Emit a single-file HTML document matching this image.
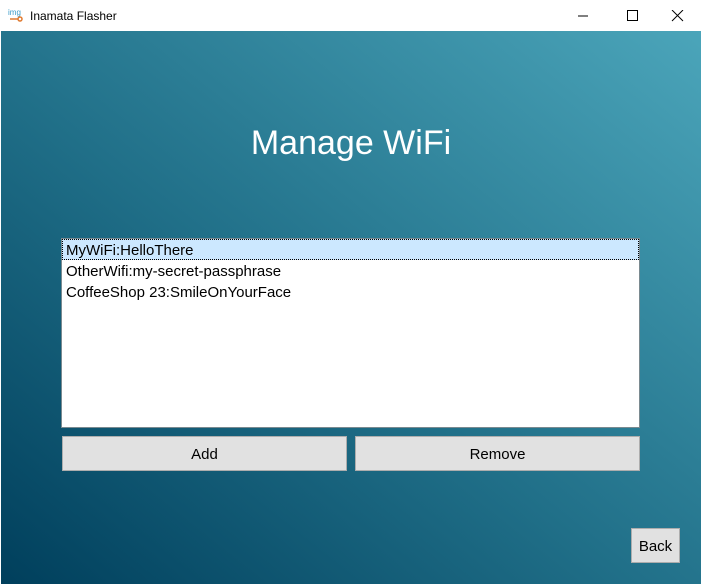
<!DOCTYPE html>
<html><head><style>
body{margin:0;width:702px;height:585px;overflow:hidden;font-family:"Liberation Sans",sans-serif;background:#fff;position:relative}
.tb{position:absolute;left:0;top:0;width:702px;height:31px;background:#fff;font-size:12px}
.tb .t{position:absolute;left:30px;top:9px;color:#000}
.main{position:absolute;left:1px;top:31px;width:700px;height:553px;background:linear-gradient(to top right,#003f5c 0%,#206f88 45%,#4ba5ba 100%)}
h1{position:absolute;left:0;width:700px;top:93px;margin:0;text-align:center;color:#fff;font-weight:normal;font-size:34px}
.list{position:absolute;left:61px;top:238px;width:577px;height:188px;background:#fff;border:1px solid #7a8a90;font-size:15px}
.it{height:21px;line-height:23px;padding-left:4px;color:#000}
.sel{background:#cce8ff;outline:1px dotted #000;outline-offset:-1px}
.btn{position:absolute;background:#e1e1e1;border:1px solid #adadad;text-align:center;font-size:15px;color:#000;box-sizing:border-box}
</style></head><body>
<div class="tb">
<svg style="position:absolute;left:8px;top:7px" width="18" height="16" viewBox="0 0 18 16"><text x="0" y="8" font-size="8" fill="#3a9cc9" font-family="Liberation Sans">img</text><path d="M2 12h8" stroke="#e07a30" stroke-width="1.5"/><circle cx="12" cy="12" r="2" fill="none" stroke="#e07a30" stroke-width="1.5"/></svg>
<span class="t">Inamata Flasher</span>
<svg style="position:absolute;left:578px;top:10px" width="110" height="12"><path d="M0 6h10" stroke="#000"/><rect x="49.5" y="0.5" width="10" height="10" fill="none" stroke="#000"/><path d="M94 0l11 11M105 0l-11 11" stroke="#000"/></svg>
</div>
<div class="main">
<h1>Manage WiFi</h1>
</div>
<div class="list">
<div class="it sel">MyWiFi:HelloThere</div>
<div class="it">OtherWifi:my-secret-passphrase</div>
<div class="it">CoffeeShop 23:SmileOnYourFace</div>
</div>
<div class="btn" style="left:62px;top:436px;width:285px;height:35px;line-height:36px">Add</div>
<div class="btn" style="left:355px;top:436px;width:285px;height:35px;line-height:36px">Remove</div>
<div class="btn" style="left:631px;top:528px;width:49px;height:35px;line-height:36px">Back</div>
</body></html>
